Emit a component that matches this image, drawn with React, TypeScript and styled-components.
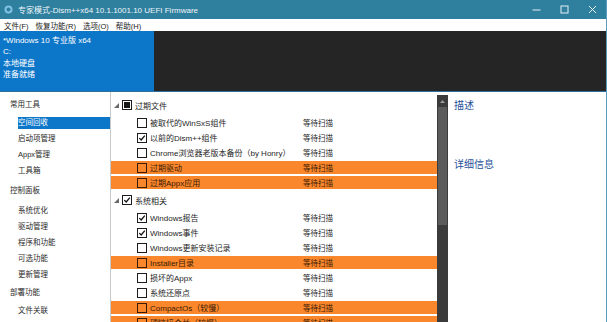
import styled, { createGlobalStyle } from "styled-components";

const GlobalStyle = createGlobalStyle`
  html, body {
    margin: 0;
    padding: 0;
    background: #ffffff;
  }
  body {
    font-family: "Liberation Sans", "Noto Sans CJK SC", sans-serif;
    font-size: 8px;
    color: #1e1e1e;
    overflow: hidden;
  }
`;

const Window = styled.div`
  display: flex;
  flex-direction: column;
  width: 606px;
  height: 322px;
  border-right: 1px solid #5b9cc0;
  overflow: hidden;
`;

const TitleBar = styled.div`
  display: flex;
  align-items: center;
  height: 19px;
  padding-left: 4px;
  background: #2f7f9e;
  color: #eef6fa;
`;

const AppIcon = styled.svg`
  width: 9px;
  height: 9px;
  flex: none;
`;

const TitleText = styled.span`
  margin-left: 5px;
  font-size: 8px;
  white-space: nowrap;
`;

const Spacer = styled.div`
  flex: 1;
`;

const ControlButton = styled.div`
  display: flex;
  align-items: center;
  justify-content: center;
  width: 28px;
  height: 19px;
`;

const MenuBar = styled.div`
  display: flex;
  align-items: center;
  gap: 7px;
  height: 12px;
  padding-left: 4px;
  background: #ffffff;
`;

const MenuItem = styled.span`
  font-size: 7.5px;
  color: #1a1a1a;
  white-space: nowrap;
`;

const InfoBar = styled.div`
  display: flex;
  height: 60px;
  border-bottom: 1px solid #2c6e9c;
`;

const InfoLeft = styled.div`
  width: 151px;
  padding: 4px 0 0 3px;
  background: #0c76c9;
  color: #ffffff;
`;

const InfoLine = styled.div`
  height: 11.4px;
  line-height: 11.4px;
  font-size: 8px;
  white-space: nowrap;
`;

const InfoRight = styled.div`
  flex: 1;
  background: #252525;
`;

const Body = styled.div`
  display: flex;
  flex: 1;
  min-height: 0;
`;

const Nav = styled.div`
  display: flex;
  flex-direction: column;
  width: 110px;
  padding-top: 3px;
  border-right: 1px solid #c9c9c9;
  flex: none;
`;

const NavGroup = styled.div<{ $gap?: number }>`
  margin-top: ${(p) => p.$gap ?? 0}px;
`;

const NavHeader = styled.div<{ $tall?: boolean }>`
  height: 20px;
  line-height: 20px;
  padding-bottom: ${(p) => (p.$tall ? 2 : 0)}px;
  padding-left: 10px;
  font-size: 7.5px;
  color: #2a2a2a;
`;

const NavItem = styled.div<{ $active?: boolean }>`
  height: 12px;
  line-height: 12px;
  padding: 2px 0 2px 15px;
  margin-left: 3px;
  font-size: 7.5px;
  background: ${(p) => (p.$active ? "#0c76c9" : "transparent")};
  background-clip: content-box;
  color: ${(p) => (p.$active ? "#ffffff" : "#2a2a2a")};
  white-space: nowrap;
`;

const ListPanel = styled.div`
  display: flex;
  flex-direction: column;
  width: 326px;
  padding-top: 3px;
  flex: none;
`;

const GroupRow = styled.div`
  display: flex;
  align-items: center;
  height: 20px;
  padding-left: 3px;
`;

const Expander = styled.svg`
  width: 5px;
  height: 5px;
  margin-right: 3px;
  flex: none;
`;

const ItemRow = styled.div<{ $hl?: boolean }>`
  display: flex;
  align-items: center;
  height: 13px;
  padding-left: 26px;
  border-top: 1px solid #ffffff;
  border-bottom: 1px solid #ffffff;
  background: ${(p) => (p.$hl ? "#fa872b" : "#ffffff")};
  color: ${(p) => (p.$hl ? "#3a1a05" : "#1e1e1e")};
`;

const Box = styled.div<{ $hl?: boolean }>`
  position: relative;
  width: 10px;
  height: 10px;
  box-sizing: border-box;
  border: 1px solid ${(p) => (p.$hl ? "#3b1c06" : "#1c1c1c")};
  background: ${(p) => (p.$hl ? "transparent" : "#ffffff")};
  flex: none;
`;

const PartialFill = styled.div`
  position: absolute;
  inset: 1px;
  background: #161616;
`;

const CheckMark = styled.svg`
  position: absolute;
  inset: 0;
  width: 8px;
  height: 8px;
`;

const Label = styled.span<{ $width?: number }>`
  margin-left: 3px;
  width: ${(p) => (p.$width ? `${p.$width}px` : "auto")};
  font-size: 8px;
  white-space: nowrap;
  overflow: hidden;
`;

const Status = styled.span`
  font-size: 7.5px;
  white-space: nowrap;
`;

const ScrollBar = styled.div`
  display: flex;
  flex-direction: column;
  width: 11px;
  margin-top: 3px;
  background: #3b3b3b;
  flex: none;
`;

const ScrollArrow = styled.div`
  display: flex;
  justify-content: center;
  align-items: center;
  height: 12px;
`;

const ScrollThumb = styled.div`
  height: 118px;
  margin: 0 1px;
  background: #5b5b5b;
`;

const Detail = styled.div`
  flex: 1;
  padding: 7px 0 0 6px;
`;

const DetailTitle = styled.div<{ $gap?: number }>`
  margin-top: ${(p) => p.$gap ?? 0}px;
  font-size: 10px;
  line-height: 14px;
  color: #27509a;
`;

type Item = { name: string; checked?: boolean; hl?: boolean };
type Group = { name: string; state: "partial" | "checked"; items: Item[] };

const groups: Group[] = [
  {
    name: "过期文件",
    state: "partial",
    items: [
      { name: "被取代的WinSxS组件" },
      { name: "以前的Dism++组件", checked: true },
      { name: "Chrome浏览器老版本备份（by Honry）" },
      { name: "过期驱动", hl: true },
      { name: "过期Appx应用", hl: true },
    ],
  },
  {
    name: "系统相关",
    state: "checked",
    items: [
      { name: "Windows报告", checked: true },
      { name: "Windows事件", checked: true },
      { name: "Windows更新安装记录" },
      { name: "Installer目录", hl: true },
      { name: "损坏的Appx" },
      { name: "系统还原点" },
      { name: "CompactOs（较慢）", hl: true },
      { name: "硬链接合并（较慢）", hl: true },
    ],
  },
];

const navGroups = [
  { title: "常用工具", items: ["空间回收", "启动项管理", "Appx管理", "工具箱"], gap: 0, tall: false },
  { title: "控制面板", items: ["系统优化", "驱动管理", "程序和功能", "可选功能", "更新管理"], gap: 2, tall: true },
  { title: "部署功能", items: ["文件关联"], gap: 0, tall: false },
];

function Check() {
  return (
    <CheckMark viewBox="0 0 8 8">
      <path d="M1.3 4.1 L3.2 6 L6.8 1.6" fill="none" stroke="#111" strokeWidth="1.3" />
    </CheckMark>
  );
}

function CheckBox({ checked, partial, hl }: { checked?: boolean; partial?: boolean; hl?: boolean }) {
  return (
    <Box $hl={hl}>
      {partial && <PartialFill />}
      {checked && <Check />}
    </Box>
  );
}

export default function App() {
  return (
    <>
      <GlobalStyle />
      <Window>
        <TitleBar>
          <AppIcon viewBox="0 0 9 9">
            <circle cx="4.5" cy="4.5" r="4" fill="#7fc0e6" />
            <circle cx="4.5" cy="4.5" r="2" fill="#2f7f9e" />
          </AppIcon>
          <TitleText>专家模式-Dism++x64 10.1.1001.10 UEFI Firmware</TitleText>
          <Spacer />
          <ControlButton>
            <svg width="9" height="9" viewBox="0 0 9 9">
              <path d="M0.5 5 H8.5" stroke="#e6f1f6" strokeWidth="1" />
            </svg>
          </ControlButton>
          <ControlButton>
            <svg width="9" height="9" viewBox="0 0 9 9">
              <rect x="1" y="1" width="7" height="7" fill="none" stroke="#e6f1f6" strokeWidth="1" />
            </svg>
          </ControlButton>
          <ControlButton>
            <svg width="9" height="9" viewBox="0 0 9 9">
              <path d="M1 1 L8 8 M8 1 L1 8" stroke="#e6f1f6" strokeWidth="1" />
            </svg>
          </ControlButton>
        </TitleBar>

        <MenuBar>
          <MenuItem>文件(F)</MenuItem>
          <MenuItem>恢复功能(R)</MenuItem>
          <MenuItem>选项(O)</MenuItem>
          <MenuItem>帮助(H)</MenuItem>
        </MenuBar>

        <InfoBar>
          <InfoLeft>
            <InfoLine>*Windows 10 专业版 x64</InfoLine>
            <InfoLine>C:</InfoLine>
            <InfoLine>本地硬盘</InfoLine>
            <InfoLine>准备就绪</InfoLine>
          </InfoLeft>
          <InfoRight />
        </InfoBar>

        <Body>
          <Nav>
            {navGroups.map((g) => (
              <NavGroup key={g.title} $gap={g.gap}>
                <NavHeader $tall={g.tall}>{g.title}</NavHeader>
                {g.items.map((it) => (
                  <NavItem key={it} $active={it === "空间回收"}>
                    {it}
                  </NavItem>
                ))}
              </NavGroup>
            ))}
          </Nav>

          <ListPanel>
            {groups.map((g) => (
              <div key={g.name}>
                <GroupRow>
                  <Expander viewBox="0 0 5 5">
                    <path d="M5 0 L5 5 L0 5 Z" fill="#6a6a6a" />
                  </Expander>
                  <CheckBox partial={g.state === "partial"} checked={g.state === "checked"} />
                  <Label>{g.name}</Label>
                </GroupRow>
                {g.items.map((it) => (
                  <ItemRow key={it.name} $hl={it.hl}>
                    <CheckBox checked={it.checked} hl={it.hl} />
                    <Label $width={153}>{it.name}</Label>
                    <Status>等待扫描</Status>
                  </ItemRow>
                ))}
              </div>
            ))}
          </ListPanel>

          <ScrollBar>
            <ScrollArrow>
              <svg width="5" height="3" viewBox="0 0 5 3">
                <path d="M0 3 L2.5 0 L5 3 Z" fill="#9a9a9a" />
              </svg>
            </ScrollArrow>
            <ScrollThumb />
          </ScrollBar>

          <Detail>
            <DetailTitle>描述</DetailTitle>
            <DetailTitle $gap={45}>详细信息</DetailTitle>
          </Detail>
        </Body>
      </Window>
    </>
  );
}
